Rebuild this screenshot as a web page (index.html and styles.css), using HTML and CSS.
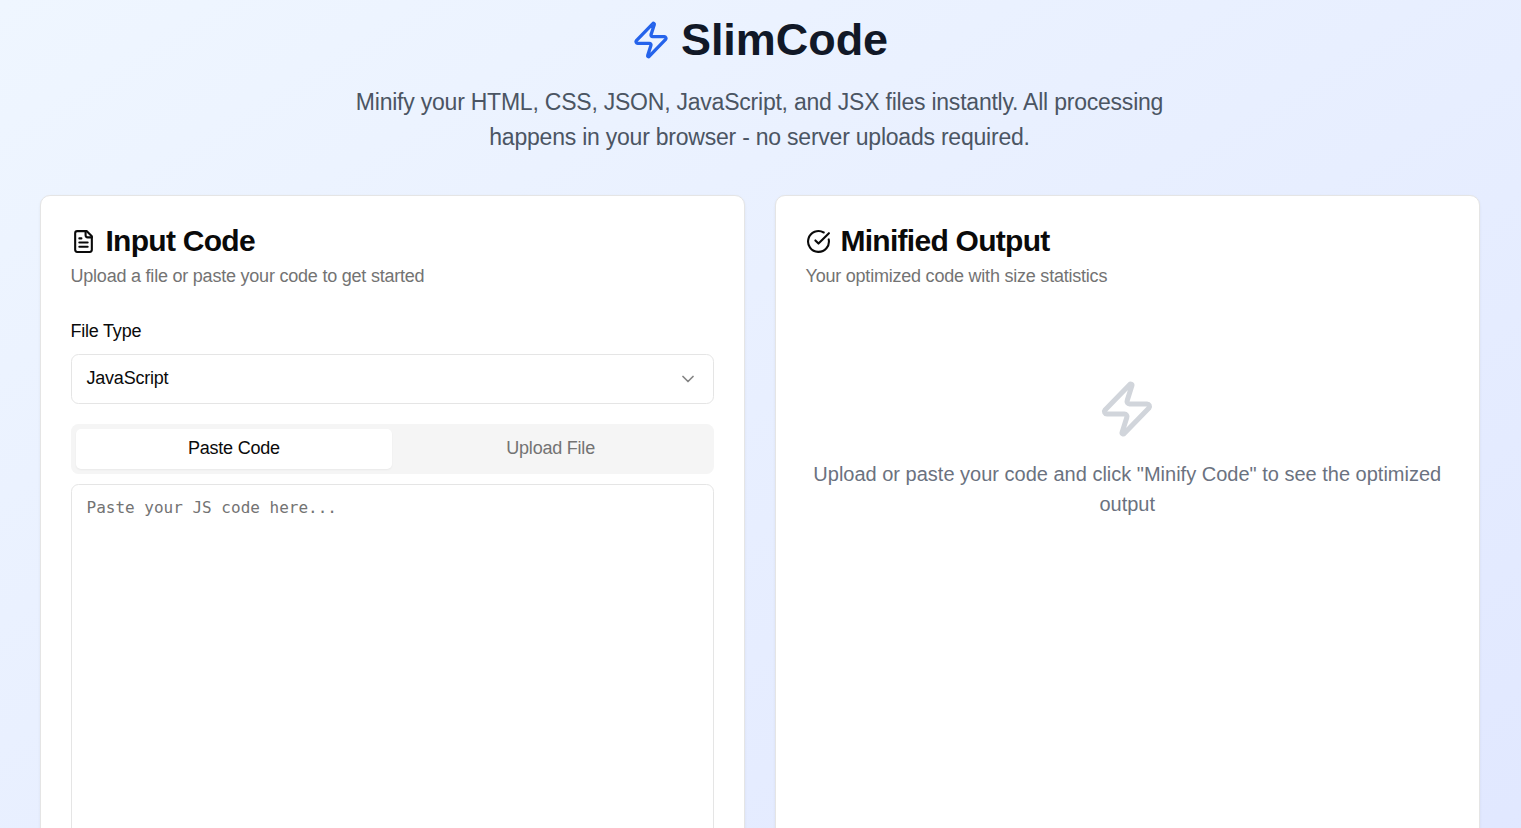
FILE: index.html
```html
<!DOCTYPE html>
<html lang="en">
<head>
<meta charset="utf-8">
<title>SlimCode</title>
<link rel="stylesheet" href="styles.css">
</head>
<body>
<div class="page">
  <header class="hero">
    <div class="brand">
      <svg class="icon brand-icon" viewBox="0 0 24 24"><path d="M4 14a1 1 0 0 1-.78-1.63l9.9-10.2a.5.5 0 0 1 .86.46l-1.92 6.02A1 1 0 0 0 13 10h7a1 1 0 0 1 .78 1.63l-9.9 10.2a.5.5 0 0 1-.86-.46l1.92-6.02A1 1 0 0 0 11 14z"/></svg>
      <h1 class="brand-name">SlimCode</h1>
    </div>
    <p class="tagline">Minify your HTML, CSS, JSON, JavaScript, and JSX files instantly. All processing<br>happens in your browser - no server uploads required.</p>
  </header>
  <main class="columns">
    <section class="card">
      <h2 class="card-title">
        <svg class="icon title-icon" viewBox="0 0 24 24"><path d="M15 2H6a2 2 0 0 0-2 2v16a2 2 0 0 0 2 2h12a2 2 0 0 0 2-2V7Z"/><path d="M14 2v4a2 2 0 0 0 2 2h4"/><path d="M10 9H8"/><path d="M16 13H8"/><path d="M16 17H8"/></svg>
        <span>Input Code</span>
      </h2>
      <p class="card-desc">Upload a file or paste your code to get started</p>
      <div class="label">File Type</div>
      <button class="select" type="button">
        <span>JavaScript</span>
        <svg class="icon chevron" viewBox="0 0 24 24"><path d="m6 9 6 6 6-6"/></svg>
      </button>
      <div class="tabs">
        <button class="tab tab-active" type="button">Paste Code</button>
        <button class="tab" type="button">Upload File</button>
      </div>
      <textarea class="code" placeholder="Paste your JS code here..."></textarea>
    </section>
    <section class="card">
      <h2 class="card-title">
        <svg class="icon title-icon" viewBox="0 0 24 24"><path d="M21.801 10A10 10 0 1 1 17 3.335"/><path d="m9 11 3 3L22 4"/></svg>
        <span>Minified Output</span>
      </h2>
      <p class="card-desc">Your optimized code with size statistics</p>
      <div class="empty">
        <svg class="icon empty-icon" viewBox="0 0 24 24"><path d="M4 14a1 1 0 0 1-.78-1.63l9.9-10.2a.5.5 0 0 1 .86.46l-1.92 6.02A1 1 0 0 0 13 10h7a1 1 0 0 1 .78 1.63l-9.9 10.2a.5.5 0 0 1-.86-.46l1.92-6.02A1 1 0 0 0 11 14z"/></svg>
        <p class="empty-text">Upload or paste your code and click "Minify Code" to see the optimized<br>output</p>
      </div>
    </section>
  </main>
</div>
</body>
</html>
```
FILE: styles.css
```css
* { box-sizing: border-box; }
body {
  margin: 0;
  font-family: "Liberation Sans", Arial, sans-serif;
  color: #0a0a0a;
  overflow: hidden;
}
h1, h2, p { margin: 0; }
button { font: inherit; color: inherit; }
.page {
  height: 828px;
  overflow: hidden;
  display: flex;
  flex-direction: column;
  padding: 15px 41px 0 40px;
  background: linear-gradient(to bottom right, #eff6ff, #e0e7ff) 0 0 / 100% 930px;
}
.icon {
  flex: none;
  fill: none;
  stroke: currentColor;
  stroke-width: 2;
  stroke-linecap: round;
  stroke-linejoin: round;
}
.hero { padding-right: 1px; text-align: center; }
.brand {
  display: flex;
  align-items: center;
  justify-content: center;
  gap: 10px;
  height: 50px;
}
.brand-icon { width: 40px; height: 40px; color: #2563eb; }
.brand-name { font-size: 45px; line-height: 50px; letter-spacing: -.05px; color: #111827; }
.tagline {
  margin-top: 20px;
  font-size: 23px;
  line-height: 35px;
  letter-spacing: -.225px;
  color: #4b5563;
  white-space: nowrap;
}
.columns {
  display: grid;
  grid-template-columns: 1fr 1fr;
  gap: 30px;
  margin-top: 40px;
}
.card {
  height: 720px;
  padding: 30px 30px 30px 29.5px;
  background: #fff;
  border: 1px solid #e5e5e5;
  border-radius: 10px;
  box-shadow: 0 1px 3px rgba(0, 0, 0, .06);
}
.card-title {
  display: flex;
  align-items: center;
  gap: 10px;
  font-size: 30px;
  line-height: 30px;
  letter-spacing: -.73px;
}
.title-icon { width: 25px; height: 25px; }
.card-desc {
  margin-top: 8px;
  font-size: 18px;
  line-height: 25px;
  letter-spacing: -.22px;
  color: #737373;
}
.label { margin-top: 30px; font-size: 18px; line-height: 25px; letter-spacing: -.22px; }
.select {
  display: flex;
  align-items: center;
  justify-content: space-between;
  width: 100%;
  height: 50px;
  margin-top: 10px;
  padding: 0 15px;
  background: #fff;
  border: 1px solid #e5e5e5;
  border-radius: 7.5px;
  font-size: 18px;
  letter-spacing: -.22px;
}
.select span { padding-bottom: 2px; }
.chevron { width: 20px; height: 20px; opacity: .5; }
.tabs {
  display: grid;
  grid-template-columns: 1fr 1fr;
  height: 50px;
  margin-top: 20px;
  padding: 5px;
  background: #f5f5f5;
  border-radius: 7.5px;
}
.tab {
  padding: 0 0 2px;
  border: 0;
  border-radius: 5px;
  background: none;
  font-size: 18px;
  letter-spacing: -.22px;
  color: #737373;
}
.tab-active {
  background: #fff;
  color: #0a0a0a;
  box-shadow: 0 1px 2px rgba(0, 0, 0, .05);
}
.code {
  display: block;
  width: 100%;
  height: 500px;
  margin-top: 10px;
  padding: 10px 15px;
  border: 1px solid #e5e5e5;
  border-radius: 7.5px;
  background: #fff;
  font: 16px/25px "DejaVu Sans Mono", monospace;
  resize: none;
}
.code::placeholder { color: #737373; }
.empty {
  display: flex;
  flex-direction: column;
  align-items: center;
  padding-top: 90px;
  text-align: center;
  color: #6b7280;
}
.empty-icon { width: 60px; height: 60px; color: #d1d5db; }
.empty-text {
  margin-top: 20px;
  font-size: 20px;
  line-height: 30px;
  white-space: nowrap;
}
```
